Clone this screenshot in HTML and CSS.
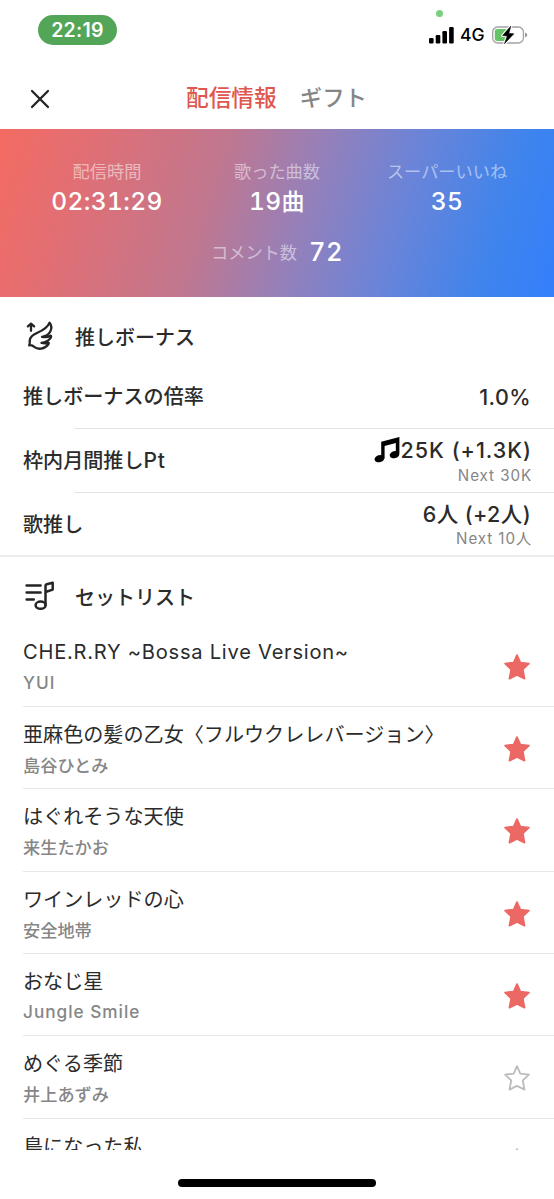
FILE: index.html
```
<!DOCTYPE html>
<html lang="ja">
<head>
<meta charset="utf-8">
<title>配信情報</title>
<link rel="stylesheet" href="styles.css">
</head>
<body>
<svg width="0" height="0" class="defs">
  <symbol id="star" viewBox="0 0 28 28">
    <path d="M14 2.9 L17.1 9.9 L25.1 10.8 L19.4 16.3 L21 24.8 L14 21.4 L7 24.8 L8.6 16.3 L2.9 10.8 L10.9 9.9 Z" stroke-width="1.7" stroke-linejoin="round"/>
  </symbol>
</svg>
<div class="screen">
  <header class="status">
    <span class="clock">22:19</span>
    <div class="indicators">
      <i class="camera-dot"></i>
      <svg width="25" height="17" viewBox="0 0 25 17"><rect x="0" y="11" width="4.6" height="5.5" rx="1.2"/><rect x="6.7" y="8" width="4.6" height="8.5" rx="1.2"/><rect x="13.4" y="4" width="4.6" height="12.5" rx="1.2"/><rect x="20.1" y="0" width="4.6" height="16.5" rx="1.2"/></svg>
      <span class="network">4G</span>
      <svg width="36" height="20" viewBox="0 0 36 20"><rect x=".7" y="2" width="30.7" height="16" rx="5" fill="#fff" stroke="#a2a2a2" stroke-width="1.3"/><path d="M5 4H17V16H5Q2.8 16 2.8 13.8V6.2Q2.8 4 5 4Z" fill="#65c466"/><path d="M33 7.5Q35.3 8.2 35.3 10Q35.3 11.8 33 12.5Z" fill="#9a9a9a"/><path d="M18.8 1.2 L10.6 10.6 L15.3 10.9 L12.5 18.7 L21.8 8.8 L16.8 8.5 Z" stroke="#fff" stroke-width="2.8" stroke-linejoin="round"/><path d="M18.8 1.2 L10.6 10.6 L15.3 10.9 L12.5 18.7 L21.8 8.8 L16.8 8.5 Z" stroke="#000" stroke-width=".6" stroke-linejoin="round"/></svg>
    </div>
  </header>
  <nav class="tabs">
    <svg class="close" width="20" height="20" viewBox="0 0 20 20"><path d="M2 2 18 18M18 2 2 18" stroke="#242424" stroke-width="2.3" stroke-linecap="round"/></svg>
    <span class="tab active">配信情報</span>
    <span class="tab">ギフト</span>
  </nav>
  <section class="summary">
    <div class="stats">
      <div class="stat"><span class="label">配信時間</span><span class="value">02:31:29</span></div>
      <div class="stat"><span class="label">歌った曲数</span><span class="value">19<span class="unit">曲</span></span></div>
      <div class="stat"><span class="label">スーパーいいね</span><span class="value">35</span></div>
    </div>
    <div class="comments"><span class="label">コメント数</span><span class="value">72</span></div>
  </section>
  <section class="bonus">
    <h2 class="heading">
      <svg class="icon" width="32" height="32" viewBox="0 0 32 32" fill="none" stroke="#242424" stroke-width="2.3" stroke-linecap="round" stroke-linejoin="round"><path d="M7 10.8V4.3M3.9 6.4 7 3.7 10.1 6.4"/><path d="M25.6 2.7C23.5 8 18.5 10.6 13.4 12.8C9 14.8 6.2 16.8 5.8 20C5.5 22 6.2 23.6 5.2 25.4C7.6 24.6 9 25.8 10.6 27.2C14 29.8 20.7 29.1 24 24.8Q25.4 22.8 24.3 22.5Q21.4 23.8 17.5 22.8Q23.5 22 26.3 18.4Q27.8 16 26.6 15.7Q22.8 18 18 16.8Q24 16 26.3 11.5C27.8 8.4 27.3 4.8 25.6 2.7Z"/></svg>
      推しボーナス
    </h2>
    <div class="row"><span class="name">推しボーナスの倍率</span><div class="amount"><span class="figure">1.0%</span></div></div>
    <div class="row"><span class="name">枠内月間推し<span class="wide">Pt</span></span><div class="amount"><span class="figure points"><svg class="note" width="27" height="28" viewBox="0 0 27 28"><path d="M7.2 5.8 25.4.9V17.5H21.8V7.1L10.6 10.1V22.5H7.2Z"/><ellipse cx="5.4" cy="22.7" rx="4.9" ry="3.5" transform="rotate(-15 5.4 22.7)"/><ellipse cx="20.5" cy="18.7" rx="4.9" ry="3.5" transform="rotate(-15 20.5 18.7)"/></svg>25K (+1.3K)</span><span class="next">Next 30K</span></div></div>
    <div class="row"><span class="name">歌推し</span><div class="amount"><span class="figure people">6人 (+2人)</span><span class="next">Next 10人</span></div></div>
  </section>
  <section class="setlist">
    <h2 class="heading">
      <svg class="icon" width="32" height="32" viewBox="0 0 32 32" fill="none" stroke="#242424" stroke-width="2.5" stroke-linecap="round" stroke-linejoin="round"><path d="M2.6 5.6H16.6M2.6 12.6H16.6M2.6 19.6H9.8"/><path d="M21.5 25V6Q21.5 4.7 22.7 4.3L28.7 2.7V9.6L21.5 12"/><ellipse cx="16.6" cy="25.2" rx="5" ry="3.6"/></svg>
      セットリスト
    </h2>
    <div class="song"><div><p class="title wide">CHE.R.RY ~Bossa Live Version~</p><p class="artist wide">YUI</p></div><svg class="star on"><use href="#star"/></svg></div>
    <div class="song"><div><p class="title">亜麻色の髪の乙女〈フルウクレレバージョン〉</p><p class="artist">島谷ひとみ</p></div><svg class="star on"><use href="#star"/></svg></div>
    <div class="song"><div><p class="title">はぐれそうな天使</p><p class="artist">来生たかお</p></div><svg class="star on"><use href="#star"/></svg></div>
    <div class="song"><div><p class="title">ワインレッドの心</p><p class="artist">安全地帯</p></div><svg class="star on"><use href="#star"/></svg></div>
    <div class="song"><div><p class="title">おなじ星</p><p class="artist wide">Jungle Smile</p></div><svg class="star on"><use href="#star"/></svg></div>
    <div class="song"><div><p class="title">めぐる季節</p><p class="artist">井上あずみ</p></div><svg class="star"><use href="#star"/></svg></div>
    <div class="song"><div><p class="title">鳥になった私</p></div><svg class="star"><use href="#star"/></svg></div>
  </section>
  <footer class="home"><i class="home-bar"></i></footer>
</div>
</body>
</html>
```
FILE: styles.css
```
* { box-sizing: border-box; margin: 0; padding: 0; }
body { background: #fff; color: #2b2b2b; font-family: Inter, "Noto Sans CJK JP", sans-serif; }
svg { display: block; flex: none; }
.defs { position: absolute; }
.screen { width: 554px; height: 1199px; display: flex; flex-direction: column; overflow: hidden; background: #fff; }
.screen > * { flex: none; }

.status { height: 64px; display: flex; justify-content: space-between; align-items: flex-start; padding: 15px 26px 0 38px; }
.clock { width: 79px; height: 30px; border-radius: 15px; background: #53a557; color: #fff; font-size: 19.5px; font-weight: 600; line-height: 30px; text-align: center; letter-spacing: .3px; }
.indicators { position: relative; display: flex; align-items: center; height: 20px; margin-top: 10px; }
.network { font-size: 17.5px; font-weight: 500; color: #000; width: 38px; padding-left: 6px; line-height: 20px; letter-spacing: -.1px; }
.camera-dot { position: absolute; left: 7px; top: -15px; width: 7px; height: 7px; border-radius: 50%; background: #78cf80; }

.tabs { height: 65px; display: flex; align-items: center; padding-left: 30px; }
.close { margin: 5px 136px 0 0; }
.tab { margin-top: 2px; font-size: 22.4px; font-weight: 500; line-height: 34px; color: #858585; white-space: nowrap; }
.tab.active { font-size: 22.7px; color: #df5750; margin-right: 23px; }

.summary { height: 168px; padding: 30px 22px 0; background: linear-gradient(107deg, #f46b62 0%, #e06f75 16%, #c0778f 38%, #9680b9 54%, #6b84d8 70%, #4084ec 87%, #337ffc 100%); }
.stats { display: grid; grid-template-columns: repeat(3, 170px); }
.stat { display: flex; flex-direction: column; align-items: center; }
.label { font-size: 17.2px; line-height: 26px; color: rgba(255, 255, 255, .5); }
.value { font-size: 24.5px; font-weight: 500; line-height: 32px; color: #fff; letter-spacing: .4px; font-variant-numeric: tabular-nums; }
.unit { font-size: 23px; }
.comments { display: flex; justify-content: center; align-items: center; gap: 12px; margin-top: 18px; }
.comments .label { padding-top: 2px; }
.comments .value { font-size: 25.5px; letter-spacing: .5px; }

.heading { display: flex; align-items: center; gap: 19px; padding: 0 24px; font-size: 20px; font-weight: 500; }
.bonus .heading { height: 67px; padding-top: 11px; }
.row { height: 64px; display: flex; align-items: center; justify-content: space-between; padding: 0 23px 2px; }
.row + .row { background: linear-gradient(#e4e4e4, #e4e4e4) 74px 0 / 100% 1px no-repeat; }
.name { font-size: 20.1px; font-weight: 500; }
.name .wide { font-size: 21px; letter-spacing: .6px; }
.amount { display: flex; flex-direction: column; align-items: flex-end; padding-top: 3px; }
.figure { display: flex; align-items: center; font-size: 21.5px; font-weight: 500; line-height: 26px; letter-spacing: .4px; white-space: pre; }
.points { letter-spacing: 1px; margin-right: -1px; }
.next { font-size: 15.2px; line-height: 20px; color: #858585; letter-spacing: .9px; margin: 2px -1px 0 0; }

.setlist { height: 595px; overflow: hidden; border-top: 2px solid #ebebeb; margin-top: -1px; }
.setlist .heading { height: 67.5px; padding-top: 11px; }
.song { height: 82.35px; display: flex; justify-content: space-between; align-items: flex-start; margin-left: 23px; padding: 13px 22px 0 0; border-bottom: 1.5px solid #e8e8e8; }
.title { font-size: 20.1px; line-height: 30px; color: #2b2b2b; white-space: nowrap; }
.title.wide { letter-spacing: .76px; position: relative; top: -1px; }
.artist { font-size: 17.2px; font-weight: 500; line-height: 24px; color: #868686; margin-top: 4px; }
.artist.wide { letter-spacing: 1px; position: relative; top: -1px; }
.star { width: 30px; height: 30px; margin-top: 14px; fill: none; stroke: #bcbcbc; }
.star.on { fill: #ec6864; stroke: #ec6864; }

.home { flex: 1; display: flex; justify-content: center; padding-top: 29px; }
.home-bar { width: 198px; height: 8px; border-radius: 4px; background: #000; }
```
